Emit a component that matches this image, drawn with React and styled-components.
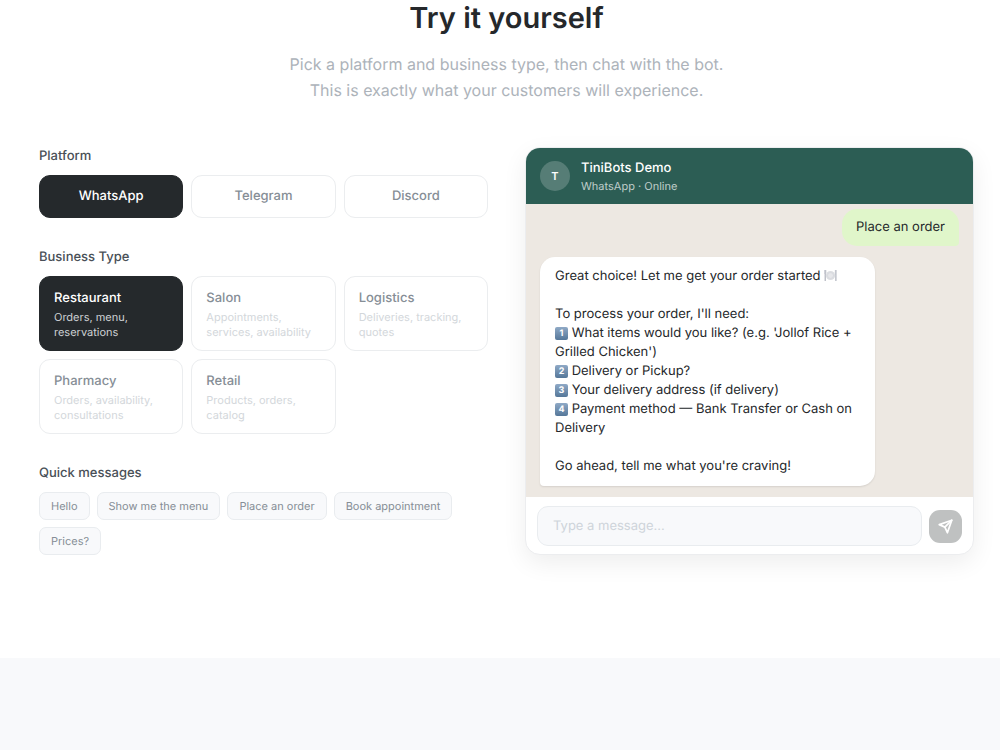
import React, { useState } from 'react'
import styled, { createGlobalStyle, css } from 'styled-components'

const GlobalStyle = createGlobalStyle`
  * {
    box-sizing: border-box;
  }
  body {
    margin: 0;
    background: #fff;
    color: #25282b;
    font-family: Inter, 'Liberation Sans', sans-serif;
    -webkit-font-smoothing: antialiased;
    text-rendering: geometricPrecision;
  }
  button,
  input {
    font-family: inherit;
    text-rendering: inherit;
    margin: 0;
  }
`

const Section = styled.section`
  padding: 0 26px 103px 39px;
`

const Intro = styled.header`
  text-align: center;
  margin-bottom: 44px;
`

const Title = styled.h2`
  margin: 0;
  font-size: 29px;
  line-height: 36px;
  font-weight: 600;
`

const Subtitle = styled.p`
  margin: 15px auto 0;
  max-width: 460px;
  font-size: 16px;
  line-height: 26px;
  color: #adb3ba;
`

const Columns = styled.div`
  display: grid;
  grid-template-columns: minmax(0, 1fr) minmax(0, 1fr);
  gap: 37px;
  align-items: start;
`

const Options = styled.div`
  display: flex;
  flex-direction: column;
  gap: 30px;
`

const Label = styled.h3`
  margin: 0 0 9px;
  font-size: 13px;
  line-height: 19px;
  font-weight: 500;
  color: #495057;
`

const OptionGrid = styled.div`
  display: grid;
  grid-template-columns: repeat(3, minmax(0, 1fr));
  gap: 8px;
`

const OptionButton = styled.button`
  border: 1px solid #ebedef;
  border-radius: 11px;
  background: #fff;
  color: #868e96;
  font-size: 13px;
  line-height: 19px;
  font-weight: 500;
  cursor: pointer;
  ${({ $active }) =>
    $active &&
    css`
      border-color: #25292c;
      background: #25292c;
      color: #fff;
    `}
`

const PlatformButton = styled(OptionButton)`
  padding: 11px;
`

const BusinessButton = styled(OptionButton)`
  padding: 12px 14px 10px;
  text-align: left;
`

const BusinessHint = styled.span`
  display: block;
  font-size: 11px;
  line-height: 15px;
  margin-top: 2px;
  font-weight: 400;
  color: ${({ $active }) => ($active ? '#ced1d4' : '#d3d7db')};
`

const Chips = styled.div`
  display: flex;
  flex-wrap: wrap;
  gap: 7px;
`

const Chip = styled.button`
  padding: 5px 11px;
  border: 1px solid #e9ecef;
  border-radius: 7px;
  background: #f8f9fb;
  color: #868e96;
  font-size: 11px;
  line-height: 16px;
  cursor: pointer;
`

const Chat = styled.div`
  border: 1px solid #ecedef;
  border-radius: 15px;
  overflow: hidden;
  background: #fff;
  box-shadow: 0 8px 24px rgba(0, 0, 0, 0.07);
`

const ChatHeader = styled.div`
  display: flex;
  align-items: center;
  gap: 11px;
  padding: 10px 14px;
  background: #2c5d54;
  color: #fff;
`

const Avatar = styled.div`
  display: grid;
  place-items: center;
  width: 30px;
  height: 30px;
  border-radius: 50%;
  background: rgba(255, 255, 255, 0.2);
  font-size: 11px;
  font-weight: 600;
`

const ChatName = styled.div`
  font-size: 13px;
  line-height: 20px;
  font-weight: 500;
`

const ChatStatus = styled.div`
  font-size: 11px;
  line-height: 16px;
  color: rgba(255, 255, 255, 0.7);
`

const Messages = styled.div`
  display: flex;
  flex-direction: column;
  justify-content: flex-end;
  gap: 11px;
  height: 293px;
  padding: 11px 14px;
  overflow: hidden;
  background: #ede8e2;
`

const Bubble = styled.div`
  flex: none;
  max-width: 80%;
  padding: 10px 15px;
  font-size: 13px;
  line-height: 19px;
  white-space: pre-line;
  ${({ $mine }) =>
    $mine
      ? css`
          align-self: flex-end;
          padding: 9px 14px;
          border-radius: 15px 15px 4px 15px;
          background: #e0f6ca;
        `
      : css`
          align-self: flex-start;
          border-radius: 15px 15px 15px 4px;
          background: #fff;
          box-shadow: 0 1px 2px rgba(0, 0, 0, 0.1);
        `}
`

const Keycap = styled.span`
  display: inline-block;
  width: 13px;
  height: 13px;
  border-radius: 2px;
  background: linear-gradient(#8fa9c6, #557799);
  color: #fff;
  font-size: 9px;
  line-height: 13px;
  font-weight: 700;
  text-align: center;
  vertical-align: 1px;
`

const PlateIcon = styled.svg`
  width: 13px;
  height: 13px;
  vertical-align: -2px;
`

const Composer = styled.form`
  display: flex;
  align-items: center;
  gap: 7px;
  padding: 9px 11px 8px;
`

const MessageInput = styled.input`
  flex: 1;
  min-width: 0;
  height: 40px;
  padding: 0 15px;
  border: 1px solid #e9ecef;
  border-radius: 11px;
  background: #f8f9fb;
  color: #25282b;
  font-size: 13px;
  &::placeholder {
    color: #ced4da;
    opacity: 1;
  }
`

const SendButton = styled.button`
  display: grid;
  place-items: center;
  width: 33px;
  height: 33px;
  padding: 0;
  border: 0;
  border-radius: 11px;
  background: #bfc1c1;
  color: #fff;
`

const NextSection = styled.section`
  min-height: 92px;
  background: #f8f9fb;
`

const platforms = ['WhatsApp', 'Telegram', 'Discord']

const businesses = [
  { name: 'Restaurant', hint: 'Orders, menu, reservations' },
  { name: 'Salon', hint: 'Appointments, services, availability' },
  { name: 'Logistics', hint: 'Deliveries, tracking, quotes' },
  { name: 'Pharmacy', hint: 'Orders, availability, consultations' },
  { name: 'Retail', hint: 'Products, orders, catalog' },
]

const quickMessages = [
  'Hello',
  'Show me the menu',
  'Place an order',
  'Book appointment',
  'Prices?',
]

const Plate = () => (
  <PlateIcon viewBox="0 0 13 13" aria-hidden="true">
    <path d="M1.2 1v11M11.9 1v11" stroke="#a9adb8" strokeWidth="1.1" />
    <path d="M0.4 1v3.5h1.6V1M11.3 1v5" stroke="#c3c6ce" strokeWidth="0.6" fill="none" />
    <circle cx="6.5" cy="6.5" r="4.6" fill="#dcdee2" />
    <circle cx="6.5" cy="6.5" r="2.9" fill="#e6e7ea" stroke="#cfd1d6" strokeWidth="0.5" />
  </PlateIcon>
)

const SendIcon = () => (
  <svg
    width="15"
    height="15"
    viewBox="0 0 24 24"
    fill="none"
    stroke="currentColor"
    strokeWidth="2.8"
    strokeLinecap="round"
    strokeLinejoin="round"
    aria-hidden="true"
  >
    <path d="M22 2 11 13" />
    <path d="M22 2 15 22 11 13 2 9Z" />
  </svg>
)

const ChatDemo = ({ platform }) => {
  const [text, setText] = useState('')
  return (
    <Chat>
      <ChatHeader>
        <Avatar>T</Avatar>
        <div>
          <ChatName>TiniBots Demo</ChatName>
          <ChatStatus>{platform} · Online</ChatStatus>
        </div>
      </ChatHeader>
      <Messages>
        <Bubble $mine>Place an order</Bubble>
        <Bubble>
          Great choice! Let me get your order started <Plate />
          {'\n\n'}To process your order, I'll need:{'\n'}
          <Keycap>1</Keycap> What items would you like? (e.g. 'Jollof Rice + Grilled Chicken'){'\n'}
          <Keycap>2</Keycap> Delivery or Pickup?{'\n'}
          <Keycap>3</Keycap> Your delivery address (if delivery){'\n'}
          <Keycap>4</Keycap> Payment method — Bank Transfer or Cash on Delivery
          {'\n\n'}Go ahead, tell me what you're craving!
        </Bubble>
      </Messages>
      <Composer onSubmit={(e) => e.preventDefault()}>
        <MessageInput
          type="text"
          aria-label="Message"
          placeholder="Type a message..."
          value={text}
          onChange={(e) => setText(e.target.value)}
        />
        <SendButton type="submit" aria-label="Send">
          <SendIcon />
        </SendButton>
      </Composer>
    </Chat>
  )
}

const App = () => {
  const [platform, setPlatform] = useState('WhatsApp')
  const [business, setBusiness] = useState('Restaurant')

  return (
    <>
      <GlobalStyle />
      <Section>
        <Intro>
          <Title>Try it yourself</Title>
          <Subtitle>
            Pick a platform and business type, then chat with the bot. This is
            exactly what your customers will experience.
          </Subtitle>
        </Intro>
        <Columns>
          <Options>
            <div>
              <Label>Platform</Label>
              <OptionGrid>
                {platforms.map((name) => (
                  <PlatformButton
                    key={name}
                    type="button"
                    $active={name === platform}
                    onClick={() => setPlatform(name)}
                  >
                    {name}
                  </PlatformButton>
                ))}
              </OptionGrid>
            </div>
            <div>
              <Label>Business Type</Label>
              <OptionGrid>
                {businesses.map(({ name, hint }) => (
                  <BusinessButton
                    key={name}
                    type="button"
                    $active={name === business}
                    onClick={() => setBusiness(name)}
                  >
                    {name}
                    <BusinessHint $active={name === business}>{hint}</BusinessHint>
                  </BusinessButton>
                ))}
              </OptionGrid>
            </div>
            <div>
              <Label>Quick messages</Label>
              <Chips>
                {quickMessages.map((message) => (
                  <Chip key={message} type="button">
                    {message}
                  </Chip>
                ))}
              </Chips>
            </div>
          </Options>
          <ChatDemo platform={platform} />
        </Columns>
      </Section>
      <NextSection />
    </>
  )
}

export default App
